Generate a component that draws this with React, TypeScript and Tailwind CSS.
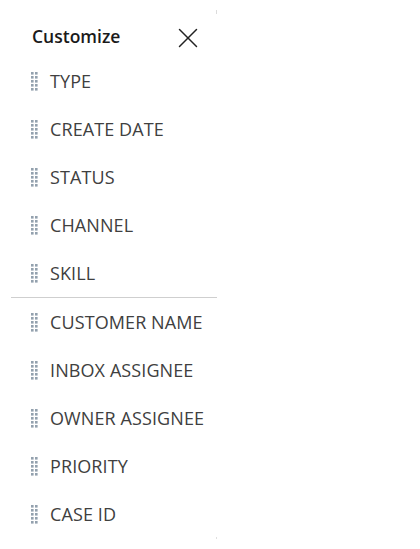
import { X } from 'lucide-react';

const groups = [
  ['TYPE', 'CREATE DATE', 'STATUS', 'CHANNEL', 'SKILL'],
  ['CUSTOMER NAME', 'INBOX ASSIGNEE', 'OWNER ASSIGNEE', 'PRIORITY', 'CASE ID'],
];

function DragHandle() {
  const dots = [];
  for (let r = 0; r < 5; r++) {
    for (let c = 0; c < 2; c++) {
      dots.push(<rect key={`${r}-${c}`} x={c * 4} y={r * 4} width="2.6" height="2.6" fill="#93a1ae" />);
    }
  }
  return (
    <svg width="7" height="19" viewBox="0 0 7 19" className="shrink-0">
      {dots}
    </svg>
  );
}

function Item({ label }: { label: string }) {
  return (
    <div className="flex h-[48px] items-center pl-[31px]">
      <DragHandle />
      <span className="ml-[12px] text-[18px] leading-none tracking-[0.1px] text-[#404040]">{label}</span>
    </div>
  );
}

export default function App() {
  return (
    <div className="h-[549px] w-[420px] bg-white font-['Open_Sans',sans-serif]">
      <div className="relative h-[549px] w-[217px]">
        <div className="absolute right-0 top-[10px] h-[4px] w-px bg-[#dcdcdc]" />
        <div className="absolute bottom-[10px] right-0 h-[2px] w-px bg-[#e0e0e0]" />
        <div className="flex h-[57px] items-start justify-between pl-[32px] pr-[12px] pt-[24px]">
          <span className="text-[17.5px] font-semibold leading-[24px] text-[#1a1a1a]">Customize</span>
          <X className="-mt-[3px] size-[34px] text-[#222]" strokeWidth={1.05} />
        </div>
        {groups.map((group, gi) => (
          <div key={gi}>
            {gi > 0 && <div className="ml-[11px] h-px bg-[#cfcfcf]" />}
            {group.map((label) => (
              <Item key={label} label={label} />
            ))}
          </div>
        ))}
      </div>
    </div>
  );
}
